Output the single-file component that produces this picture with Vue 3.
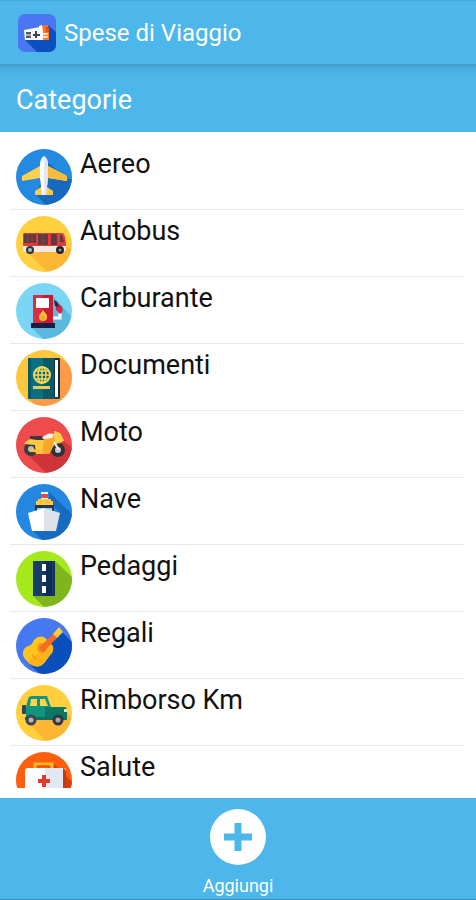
<template>
  <div class="app">
    <header class="toolbar">
      <svg class="logo" viewBox="0 0 38 38" aria-hidden="true">
        <defs>
          <clipPath id="logo-clip"><rect width="38" height="38" rx="7" /></clipPath>
        </defs>
        <g clip-path="url(#logo-clip)">
          <rect width="38" height="38" fill="#4a76f2" />
          <path d="M7 26 19 38H38V18L30 11Z" fill="#0b4fc0" />
          <path d="M6 16 22 13 24 26H7Z" fill="#fbfbfd" />
          <path d="M22 12 30 11 31 17V26H22Z" fill="#ff7a22" />
          <path d="M21 12 24 11 25 18V26H21Z" fill="#fff" />
          <path d="M27 12l4 2v4h-3z" fill="#e4511c" />
          <path d="M8 18h5v6H8z" fill="#555a66" />
          <path d="M8 21h5" stroke="#fff" />
          <path d="M15 21h7M18 17v7" stroke="#3d4250" stroke-width="2" />
          <path d="M25 20h5M25 23h5" stroke="#fff" stroke-width="1.5" />
        </g>
      </svg>
      <h1 class="title">Spese di Viaggio</h1>
    </header>
    <h2 class="section">Categorie</h2>

    <main class="content">
      <ul class="list">
        <li v-for="item in categories" :key="item.name" class="row">
          <svg class="icon" viewBox="0 0 56 56" aria-hidden="true">
            <circle cx="28" cy="28" r="28" :fill="item.color" />
            <g clip-path="url(#circle-clip)" v-html="item.art"></g>
          </svg>
          <span class="name">{{ item.name }}</span>
        </li>
      </ul>
    </main>

    <footer class="bottom">
      <button type="button" class="add">
        <svg class="plus" viewBox="0 0 56 56" aria-hidden="true">
          <circle cx="28" cy="28" r="28" fill="#fff" />
          <path d="M28 14v28M14 28h28" stroke="#4db6ea" stroke-width="7" />
        </svg>
        <span>Aggiungi</span>
      </button>
    </footer>

    <svg class="defs" width="0" height="0" aria-hidden="true">
      <defs>
        <clipPath id="circle-clip"><circle cx="28" cy="28" r="28" /></clipPath>
      </defs>
    </svg>
  </div>
</template>

<script setup>
// Categories with the artwork drawn inside each 56x56 disc
const categories = [
  {
    name: "Aereo",
    color: "#2489e0",
    art: `
      <path d="M7 31 24 29 24 36 19 45 30 56H56V30L50 30 33 14Z" fill="#1769bd"/>
      <path d="M24 17 6 27V32L24 29ZM32 17 51 27V32L32 29Z" fill="#ffd04c"/>
      <path d="M32 17 51 27V32L32 29Z" fill="#f8bd3b"/>
      <path d="M25 38 19 42V46H37V42L31 38Z" fill="#ffcb45"/>
      <path d="M28 7C25 9 24 12 24 16V29L26 46H30L32 29V16C32 12 31 9 28 7Z" fill="#fff"/>
      <path d="M28 7C31 9 32 12 32 16V29L30 46H28Z" fill="#e2e7ef"/>`,
  },
  {
    name: "Autobus",
    color: "#ffd03f",
    art: `
      <path d="M11 36 31 56H56V34L50 30Z" fill="#fdb735"/>
      <path d="M8 17H46Q48 17 49 21L50 27V34H7V18Z" fill="#e43b3a"/>
      <path d="M7 30H50V34Q49 36 47 36H9Q7 36 7 34Z" fill="#f5e9e6"/>
      <path d="M8 18H20V27H8ZM22 18H32V29H22Z" fill="#5a3e43"/>
      <path d="M12 18V27M16 18V27M27 18V29" stroke="#a8373a"/>
      <path d="M35 18H41V29H35ZM44 19H46L48 26H44Z" fill="#5d3a40"/>
      <circle cx="14" cy="34" r="4" fill="#303640"/><circle cx="14" cy="34" r="2" fill="#aeb7bd"/>
      <circle cx="44" cy="34" r="4" fill="#24272f"/><circle cx="44" cy="34" r="1.5" fill="#929aa0"/>`,
  },
  {
    name: "Carburante",
    color: "#7bd6f5",
    art: `
      <path d="M15 44 27 56H56V34L43 20 37 13V44Z" fill="#5bb9df"/>
      <path d="M37 35H44V27" fill="none" stroke="#fff" stroke-width="3"/>
      <path d="M40 18 46 24Q48 29 44 31L40 27Z" fill="#d9263c"/>
      <path d="M38 17 41 19 43 24 39 23Z" fill="#20284b"/>
      <path d="M17 12H37V41H17Z" fill="#e02c40"/>
      <path d="M27 12H37V41H27Z" fill="#c91b35"/>
      <rect x="20" y="15" width="13" height="10" rx="1" fill="#fff"/>
      <path d="M27 27C29 30 31 31 31 34A4 4 0 0 1 23 34C23 31 26 30 27 27Z" fill="#ffc934"/>
      <path d="M27 31C28 33 29 33 29 35A2 2 0 0 1 25 35Z" fill="#ff9e2b"/>
      <path d="M15 40H39V45H15Z" fill="#172044"/>`,
  },
  {
    name: "Documenti",
    color: "#ffc73e",
    art: `
      <path d="M12 48 20 56H56V18L45 8Z" fill="#ff9a46"/>
      <rect x="12" y="8" width="32" height="41" rx="1" fill="#075a68"/>
      <path d="M15 8H27V49H15Z" fill="#087080"/>
      <path d="M38 8H42Q44 8 44 11V48H38Z" fill="#123344"/>
      <path d="M39 10H42V47H39Z" fill="#fff"/>
      <circle cx="26" cy="25" r="8" fill="none" stroke="#f5d759" stroke-width="2"/>
      <ellipse cx="26" cy="25" rx="4" ry="8" fill="none" stroke="#f5d759" stroke-width="1.5"/>
      <path d="M26 17V33M18 25H34M20 21H32M20 29H32" stroke="#f5d759" stroke-width="1.5"/>
      <path d="M17 36H34V39H17Z" fill="#f0ca4d"/>`,
  },
  {
    name: "Moto",
    color: "#ee4b4d",
    art: `
      <path d="M10 36 30 56H56V31L46 22Z" fill="#cf3439"/>
      <circle cx="15" cy="32" r="5" fill="#b9bec4" stroke="#383c42" stroke-width="4"/>
      <circle cx="42" cy="33" r="5" fill="#c8ccd1" stroke="#303238" stroke-width="4"/>
      <path d="M8 27Q13 20 20 23L24 20 37 20 39 14 45 17 48 24 44 26Q37 27 36 32L33 37H20L19 28Z" fill="#ffc940"/>
      <path d="M28 22 39 20 37 29 33 37H26Z" fill="#f7a92d"/>
      <path d="M14 19 26 19 28 23H22L14 22Z" fill="#44343b"/>
      <path d="M26 21Q31 15 38 17L36 21 28 22Z" fill="#f7f2ed"/>
      <path d="M38 14 44 16 48 24 39 23Z" fill="#ffcd49"/>
      <path d="M38 25 43 33" stroke="#eceef0" stroke-width="2"/>
      <path d="M14 33 27 35" stroke="#ffbe3b" stroke-width="3"/>`,
  },
  {
    name: "Nave",
    color: "#2488e2",
    art: `
      <path d="M16 46 26 56H56V30L33 8V16L39 24 44 29Z" fill="#166bbf"/>
      <path d="M25 8H32V17H25Z" fill="#f7f7fa"/>
      <path d="M25 10H32V14H25Z" fill="#ea4a4d"/>
      <path d="M22 15H35V17H37V21H20V17H22Z" fill="#ffc83e"/>
      <path d="M19 21H38V28H19Z" fill="#29384d"/>
      <path d="M21 24H36V27H21Z" fill="#83d3f3"/>
      <path d="M12 29 28 24V47H16Z" fill="#fff"/>
      <path d="M28 24 44 29 40 47H28Z" fill="#dde2e8"/>`,
  },
  {
    name: "Pedaggi",
    color: "#a5e91d",
    art: `
      <path d="M17 45 28 56H56V26L39 10Z" fill="#7fb61d"/>
      <path d="M17 10H28V45H17Z" fill="#173d68"/>
      <path d="M28 10H39V45H28Z" fill="#102b55"/>
      <path d="M19 10V45M37 10V45" stroke="#24466f"/>
      <path d="M26 13H30V20H26ZM26 24H30V31H26ZM26 35H30V42H26Z" fill="#fff"/>`,
  },
  {
    name: "Regali",
    color: "#4678f2",
    art: `
      <path d="M13 46 24 56H56V24L45 13Z" fill="#0a50bd"/>
      <path d="M19 21C23 17 29 18 31 22L33 25C38 27 38 31 36 35C33 38 32 40 29 44C24 50 19 49 14 46L9 41C5 36 7 30 12 28C17 27 16 24 19 21Z" fill="#ffc51f"/>
      <path d="M33 25C38 27 38 31 36 35C33 38 32 40 29 44C24 50 19 49 14 46L12 44Z" fill="#ffb31a"/>
      <circle cx="26" cy="30" r="5" fill="#ff8d1c"/>
      <path d="M23 30 37 16 41 20 27 34Z" fill="#f36a23"/>
      <path d="M37 16 43 9 47 14 41 20Z" fill="#ffcc32"/>
      <path d="M16 37 20 41" stroke="#f79a1e" stroke-width="2"/>`,
  },
  {
    name: "Rimborso Km",
    color: "#ffcf3d",
    art: `
      <path d="M11 37 30 56H56V34L50 26Z" fill="#fdb634"/>
      <rect x="6" y="20" width="4" height="9" rx="1" fill="#36424a"/>
      <path d="M10 22 12 14Q13 11 16 11H31L35 22H48Q51 22 51 26V35H10Z" fill="#11957f"/>
      <path d="M29 22H48Q51 22 51 26V35H29Z" fill="#087866"/>
      <path d="M14 21 15 14H21V21H14ZM24 14H29L32 21H24Z" fill="#ffd450"/>
      <path d="M9 32H51V35H9Z" fill="#176b61"/>
      <path d="M48 24H51V27H48Z" fill="#e5e8ba"/>
      <circle cx="15" cy="35" r="4" fill="#b8b8b8" stroke="#40434a" stroke-width="3"/>
      <circle cx="42" cy="35" r="4" fill="#a9a9ad" stroke="#36363e" stroke-width="3"/>`,
  },
  {
    name: "Salute",
    color: "#fc600e",
    art: `
      <path d="M37 11 56 30V56H48Z" fill="#d63d0b"/>
      <path d="M19 18V12H36V18" fill="none" stroke="#ffba1f" stroke-width="3"/>
      <path d="M22 17V14H33V17" fill="none" stroke="#d84711"/>
      <rect x="9" y="16" width="41" height="34" rx="3" fill="#fff"/>
      <path d="M29 16H47V50H29Z" fill="#e3e7f3"/>
      <path d="M47 16Q50 17 50 20V50H47Z" fill="#bd3d20"/>
      <path d="M28 23V35M22 29H34" stroke="#e03a2a" stroke-width="4"/>`,
  },
];
</script>

<style>
body {
  margin: 0;
}
</style>

<style scoped>
.app {
  display: flex;
  flex-direction: column;
  height: 100vh;
  background: #fff;
  color: #111;
  font-family: Roboto, "Liberation Sans", sans-serif;
}

.toolbar {
  display: flex;
  flex: none;
  align-items: center;
  gap: 8px;
  height: 64px;
  padding: 0 18px;
  border-top: 1px solid #48a9d8;
  box-sizing: border-box;
  background: #4db6ea;
}

.logo {
  width: 38px;
  height: 38px;
}

.title {
  margin: 0;
  color: #fff;
  font-size: 24px;
  font-weight: 400;
}

.section {
  flex: none;
  margin: 0;
  padding: 4px 16px 0;
  color: #fff;
  font-size: 27px;
  font-weight: 400;
  line-height: 64px;
  background: linear-gradient(#419cc9, #48abdc 4px, #4db6ea 12px);
}

.content {
  flex: 1;
  min-height: 0;
  margin: 11px 12px 10px 10px;
  overflow-y: auto;
  scrollbar-width: none;
}

.list {
  margin: 0;
  padding: 0;
  list-style: none;
}

.row {
  display: flex;
  gap: 8px;
  height: 67px;
  padding: 6px 6px 0;
  border-bottom: 1px solid #e9e9e9;
  box-sizing: border-box;
}

.icon {
  flex: none;
  width: 56px;
  height: 56px;
}

.name {
  font-size: 27px;
  line-height: 30px;
}

.bottom {
  display: flex;
  flex: none;
  justify-content: center;
  height: 102px;
  border-bottom: 1px solid #3d8fb8;
  box-sizing: border-box;
  background: #4db6ea;
}

.add {
  display: flex;
  flex-direction: column;
  align-items: center;
  gap: 10px;
  padding: 11px 0 0;
  border: 0;
  background: none;
  color: #fff;
  font-family: inherit;
  font-size: 18px;
  line-height: 22px;
  cursor: pointer;
}

.plus {
  width: 56px;
  height: 56px;
}

.defs {
  position: absolute;
}
</style>
